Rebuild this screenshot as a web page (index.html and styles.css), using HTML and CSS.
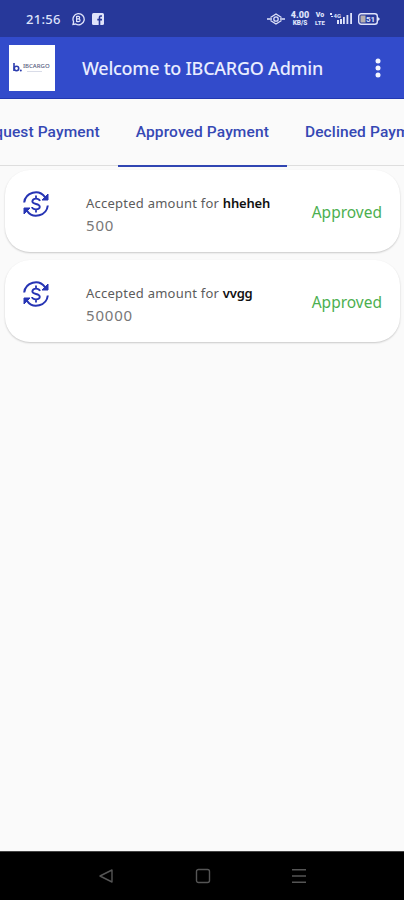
FILE: index.html
```
<!DOCTYPE html>
<html lang="en">
<head>
<meta charset="utf-8">
<title>IBCARGO Admin</title>
<link rel="stylesheet" href="styles.css">
</head>
<body>
<div class="status">
  <span class="clock">21:56</span>
  <svg class="s-chat" width="14" height="14" viewBox="0 0 14 14" fill="none" stroke="currentColor"><path d="M2 12.5 2.6 9.8A5.6 5.6 0 1 1 4.6 12z" stroke-width="1.3"/><path d="M5.6 4v6M5.6 4.3h1.8a1.2 1.2 0 0 1 0 2.5H5.6h2a1.4 1.4 0 0 1 0 2.9h-2" stroke-width="1.2"/></svg>
  <svg class="s-fb" width="12" height="12" viewBox="0 0 12 12"><rect width="12" height="12" rx="1.5" fill="currentColor"/><path d="M10 3H8.7Q7.5 3 7.5 4.3V12M5.3 6.6H10" fill="none" stroke="#27379a" stroke-width="1.6"/></svg>
  <span class="spacer"></span>
  <svg class="s-eye" width="18" height="12" viewBox="0 0 18 12" fill="none" stroke="currentColor" stroke-width="1.3"><path d="M0 6h5M13 6h5M3.5 4.5 9 1l5.5 3.5M3.5 7.5 9 11l5.5-3.5"/><circle cx="9" cy="6" r="2.2"/></svg>
  <span class="stack s-speed"><b>4.00</b><i>KB/S</i></span>
  <span class="stack s-vo"><b>Vo</b><i>LTE</i></span>
  <svg class="s-signal" width="23" height="13" viewBox="0 0 23 13" fill="currentColor"><path d="M0 1h2v2H0zM1 4h2v1H1zM7 8h2v4H7zM10 7h2v5h-2zM13 5h1.8v7H13zM16.5 3h1.8v9h-1.8zM20.2 1H22v11h-1.8z"/><text x="3.5" y="6" font-size="6" font-weight="700">4G</text></svg>
  <svg class="s-battery" width="22" height="12" viewBox="0 0 22 12"><rect x=".7" y=".7" width="18.6" height="10.6" rx="2.5" fill="none" stroke="currentColor" stroke-width="1.4"/><rect x="2.5" y="2.5" width="5" height="7" fill="#b5afae"/><path d="M20 4l2 2-2 2z" fill="currentColor"/><text x="8" y="9" font-size="8" font-weight="700" fill="currentColor">51</text></svg>
</div>
<header class="appbar">
  <div class="logo">
    <svg width="9" height="9" viewBox="0 0 9 9"><path d="M1 0v8" stroke="#2b3cae" stroke-width="1.6"/><circle cx="3.5" cy="5.5" r="2.2" fill="none" stroke="#2b3cae" stroke-width="1.6"/><circle cx="7.8" cy="7.5" r="1" fill="#2b3cae"/></svg>
    <div class="logo-text"><b>IBCARGO</b><span></span></div>
  </div>
  <h1>Welcome to IBCARGO Admin</h1>
  <svg class="more" width="6" height="20" viewBox="0 0 6 20" fill="#f4f5ff"><circle cx="3" cy="3" r="2.5"/><circle cx="3" cy="10" r="2.5"/><circle cx="3" cy="17" r="2.5"/></svg>
</header>
<nav class="tabs">
  <div class="tab">Request Payment</div>
  <div class="tab active">Approved Payment</div>
  <div class="tab">Declined Payment</div>
</nav>
<main>
  <article class="card">
    <svg class="coin" width="28" height="26" viewBox="0 0 28 26" fill="none" stroke="#2634b4" stroke-width="2"><path d="M2.2 11.5A11.5 11.5 0 0 1 23 6.2M25.8 14.5A11.5 11.5 0 0 1 5 19.8"/><path d="M26 3v6h-6zM2 23v-6h6z" fill="#2634b4" stroke-width="1"/><path d="M14 4.5v3M14 18.5v3M18 10Q17 7.7 14 7.7T10.3 10.2Q10.3 12.2 14 13T17.8 15.8Q17.8 18.3 14 18.3T10 16" stroke-width="1.8"/></svg>
    <div class="info"><p>Accepted amount for <b>hheheh</b></p><span class="amount">500</span></div>
    <span class="state">Approved</span>
  </article>
  <article class="card">
    <svg class="coin" width="28" height="26" viewBox="0 0 28 26" fill="none" stroke="#2634b4" stroke-width="2"><path d="M2.2 11.5A11.5 11.5 0 0 1 23 6.2M25.8 14.5A11.5 11.5 0 0 1 5 19.8"/><path d="M26 3v6h-6zM2 23v-6h6z" fill="#2634b4" stroke-width="1"/><path d="M14 4.5v3M14 18.5v3M18 10Q17 7.7 14 7.7T10.3 10.2Q10.3 12.2 14 13T17.8 15.8Q17.8 18.3 14 18.3T10 16" stroke-width="1.8"/></svg>
    <div class="info"><p>Accepted amount for <b>vvgg</b></p><span class="amount">50000</span></div>
    <span class="state">Approved</span>
  </article>
</main>
<footer class="navbar">
  <svg width="16" height="16" viewBox="0 0 16 16"><path d="M14 2v12L2 8z"/></svg>
  <svg width="16" height="16" viewBox="0 0 16 16"><rect x="1.5" y="1.5" width="13" height="13" rx="2"/></svg>
  <svg width="16" height="16" viewBox="0 0 16 16"><path d="M1 1.7h14M1 8h14M1 14.3h14"/></svg>
</footer>
</body>
</html>
```
FILE: styles.css
```
* { box-sizing: border-box; }
body {
  margin: 0;
  width: 404px;
  height: 900px;
  display: flex;
  flex-direction: column;
  overflow: hidden;
  background: #fafafa;
  font-family: "Noto Sans", sans-serif;
}
.status {
  flex: none;
  height: 37px;
  padding: 0 24px 0 26px;
  display: flex;
  align-items: center;
  background: #27389a;
  color: #dfe3fa;
}
.clock { width: 45px; font-size: 13px; font-weight: 500; letter-spacing: .3px; line-height: 36px; }
.s-fb { margin-left: 7px; }
.spacer { flex: 1; }
.stack {
  display: flex;
  flex-direction: column;
  align-items: center;
  font-family: Roboto, sans-serif;
  font-weight: 900;
}
.stack b { font-size: 9px; line-height: 9px; }
.stack i { font-size: 6.5px; line-height: 7px; font-style: normal; }
.s-speed { width: 20px; margin-left: 5px; }
.s-vo { width: 10px; margin-left: 5px; }
.s-vo b { font-size: 7px; line-height: 8px; }
.s-vo i { font-size: 6px; }
.s-signal { margin-left: 5px; }
.s-battery { margin-left: 5px; }
.status text { font-family: Roboto, sans-serif; }
.appbar {
  flex: none;
  height: 62px;
  padding: 0 23px 0 9px;
  display: flex;
  align-items: center;
  background: #324bcb;
  border-bottom: 1px solid #2238b2;
}
.logo {
  width: 46px;
  height: 46px;
  background: #fff;
  display: flex;
  align-items: center;
  padding-left: 4px;
  gap: 1px;
}
.logo-text b {
  display: block;
  font-size: 6px;
  line-height: 7px;
  font-weight: 500;
  color: #555b7e;
}
.logo-text span { display: block; width: 15px; height: 1px; margin: 1px 0 0 4px; background: #d9dce8; }
h1 {
  margin: 0 0 0 27px;
  flex: 1;
  font-size: 18px;
  font-weight: 500;
  letter-spacing: -.25px;
  line-height: 24px;
  color: #e9edff;
  white-space: nowrap;
}
.tabs {
  flex: none;
  height: 68px;
  display: flex;
  justify-content: center;
  overflow: hidden;
  background: linear-gradient(#dedede, #dedede) 0 66px / 100% 1px no-repeat;
}
.tab {
  flex: none;
  padding: 0 18px;
  line-height: 67px;
  font-family: Roboto, sans-serif;
  font-size: 15.5px;
  font-weight: 500;
  letter-spacing: .12px;
  color: #3548b4;
  white-space: nowrap;
}
.tab:first-child { margin-left: 4px; }
.active { height: 68px; border-bottom: 2px solid #3045b2; }
main {
  flex: 1;
  padding: 3px 4px 0 5px;
  display: flex;
  flex-direction: column;
  gap: 8px;
}
.card {
  height: 82px;
  border-radius: 25px;
  background: #fff;
  box-shadow: 0 1px 2px rgba(0, 0, 0, .2);
  display: flex;
  padding: 21px 18px 0 17px;
}
.info { margin-left: 36px; flex: 1; padding-top: 2px; }
.info p { margin: 0; font-size: 13px; line-height: 21px; letter-spacing: .24px; color: #5c5c5c; white-space: nowrap; }
.info b { color: #111; font-weight: 600; letter-spacing: -.2px; }
.amount { display: block; font-size: 15px; line-height: 22px; letter-spacing: .8px; color: #777; }
.state { font-size: 15.5px; line-height: 42px; color: #4caf50; }
.navbar {
  flex: none;
  height: 49px;
  padding: 0 97px 0 98px;
  display: flex;
  align-items: center;
  justify-content: space-between;
  background: #000;
  border-top: 1px solid #444;
}
.navbar svg { fill: none; stroke: #555; stroke-width: 1.4; stroke-linejoin: round; }
```
